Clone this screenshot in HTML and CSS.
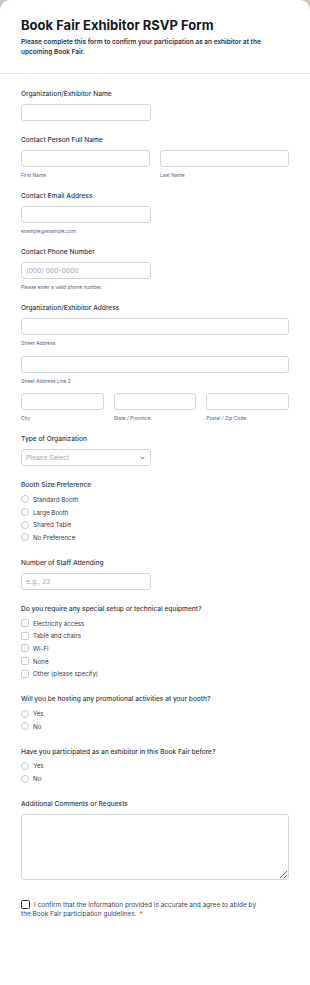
FILE: index.html
```html
<!DOCTYPE html>
<html lang="en">

<head>
    <meta charset="UTF-8">
    <meta name="viewport" content="width=device-width, initial-scale=1.0">
    <title>Book Fair Exhibitor RSVP Form</title>
    <link rel="stylesheet" href="styles.css">
</head>

<body>
    <div class="card">
        <div class="header">
            <h1>Book Fair Exhibitor RSVP Form</h1>
            <p>Please complete this form to confirm your participation as an exhibitor at the upcoming Book Fair.</p>
        </div>

        <form class="fields">
            <div class="field">
                <label class="label">Organization/Exhibitor Name</label>
                <input type="text" class="half">
            </div>

            <div class="field">
                <label class="label">Contact Person Full Name</label>
                <div class="row two">
                    <div>
                        <input type="text">
                        <span class="sub">First Name</span>
                    </div>
                    <div>
                        <input type="text">
                        <span class="sub">Last Name</span>
                    </div>
                </div>
            </div>

            <div class="field">
                <label class="label">Contact Email Address</label>
                <input type="email" class="half">
                <span class="sub">example@example.com</span>
            </div>

            <div class="field">
                <label class="label">Contact Phone Number</label>
                <input type="tel" class="half" placeholder="(000) 000-0000">
                <span class="sub">Please enter a valid phone number.</span>
            </div>

            <div class="field">
                <label class="label">Organization/Exhibitor Address</label>
                <input type="text">
                <span class="sub">Street Address</span>
                <input type="text" class="gap">
                <span class="sub">Street Address Line 2</span>
                <div class="row three gap">
                    <div>
                        <input type="text">
                        <span class="sub">City</span>
                    </div>
                    <div>
                        <input type="text">
                        <span class="sub">State / Province</span>
                    </div>
                    <div>
                        <input type="text">
                        <span class="sub">Postal / Zip Code</span>
                    </div>
                </div>
            </div>

            <div class="field">
                <label class="label">Type of Organization</label>
                <div class="select half">
                    <span>Please Select</span>
                    <svg width="5" height="4" viewBox="0 0 5 4"><path d="M0.7 1 L2.5 2.8 L4.3 1" fill="none" stroke="#2c3345" stroke-width="0.8"/></svg>
                </div>
            </div>

            <div class="field">
                <label class="label list">Booth Size Preference</label>
                <div class="opt"><span class="radio"></span>Standard Booth</div>
                <div class="opt"><span class="radio"></span>Large Booth</div>
                <div class="opt"><span class="radio"></span>Shared Table</div>
                <div class="opt"><span class="radio"></span>No Preference</div>
            </div>

            <div class="field">
                <label class="label">Number of Staff Attending</label>
                <input type="text" class="half" placeholder="e.g., 23">
            </div>

            <div class="field">
                <label class="label list">Do you require any special setup or technical equipment?</label>
                <div class="opt"><span class="check"></span>Electricity access</div>
                <div class="opt"><span class="check"></span>Table and chairs</div>
                <div class="opt"><span class="check"></span>Wi-Fi</div>
                <div class="opt"><span class="check"></span>None</div>
                <div class="opt"><span class="check"></span>Other (please specify)</div>
            </div>

            <div class="field">
                <label class="label list">Will you be hosting any promotional activities at your booth?</label>
                <div class="opt"><span class="radio"></span>Yes</div>
                <div class="opt"><span class="radio"></span>No</div>
            </div>

            <div class="field">
                <label class="label list">Have you participated as an exhibitor in this Book Fair before?</label>
                <div class="opt"><span class="radio"></span>Yes</div>
                <div class="opt"><span class="radio"></span>No</div>
            </div>

            <div class="field">
                <label class="label">Additional Comments or Requests</label>
                <textarea></textarea>
            </div>

            <div class="confirm required">
                <span class="box"></span>I confirm that the information provided is accurate and agree to abide by the Book Fair participation guidelines.
            </div>
        </form>
    </div>
</body>

</html>
```

FILE: styles.css
```css
* {
    margin: 0;
    padding: 0;
    box-sizing: border-box;
}

body {
    background: #cfc6bc;
    font-family: Inter, "Noto Sans", sans-serif;
    color: #343a48;
}

.card {
    background: #fff;
    border-radius: 10px 10px 0 0;
    min-height: 985px;
}

.header {
    padding: 17px 21px 16px;
    border-bottom: 1px solid #e4e6eb;
}

.header h1 {
    font-size: 13px;
    font-weight: 700;
    line-height: 16px;
    color: #16191f;
    margin-bottom: 4px;
}

.header p {
    font-size: 6.5px;
    font-weight: 600;
    line-height: 10px;
    color: #2c3345;
    width: 250px;
}

.fields {
    padding: 15px 21px 0;
}

.field {
    margin-bottom: 14px;
}

.label {
    display: block;
    font-size: 6.6px;
    font-weight: 500;
    line-height: 10px;
    margin-bottom: 5px;
    color: #343a48;
}

.label.list {
    margin-bottom: 3px;
}

input,
textarea,
.select {
    display: block;
    width: 100%;
    height: 17px;
    border: 1px solid #d3d6de;
    border-radius: 3px;
    background: #fff;
    font-family: inherit;
    font-size: 6.8px;
    padding: 0 4px;
    outline: none;
}

input::placeholder {
    color: #a0a7b8;
}

.half {
    width: 130px;
}

input.gap {
    margin-top: 11px;
}

.sub {
    display: block;
    font-size: 4.9px;
    line-height: 6px;
    margin-top: 5px;
    margin-bottom: -1px;
    color: #57647e;
}

.row {
    display: grid;
    gap: 10px;
}

.row.two {
    grid-template-columns: 1fr 1fr;
}

.row.three {
    grid-template-columns: 1fr 1fr 1fr;
}

.row.gap {
    margin-top: 10px;
}

.select {
    display: flex;
    align-items: center;
    justify-content: space-between;
    padding-right: 5px;
    color: #a0a7b8;
}

.opt {
    display: flex;
    align-items: center;
    height: 12.7px;
    font-size: 6.2px;
    color: #343a48;
}

.radio,
.check {
    width: 8px;
    height: 8px;
    border: 1px solid #c3c8d2;
    margin-right: 4px;
    flex-shrink: 0;
}

.radio {
    border-radius: 50%;
}

.check {
    border-radius: 1.5px;
}

textarea {
    height: 66px;
    resize: vertical;
}

.confirm {
    margin-top: 20px;
    font-size: 6.5px;
    line-height: 9px;
    color: #3d4558;
    width: 245px;
}

.confirm .box {
    display: inline-block;
    width: 9px;
    height: 9px;
    border: 1px solid #2c3345;
    border-radius: 1.5px;
    vertical-align: -2px;
    margin-right: 4px;
}

.required::after {
    content: "*";
    margin-left: 1px;
    color: #e0332c;
}
```
